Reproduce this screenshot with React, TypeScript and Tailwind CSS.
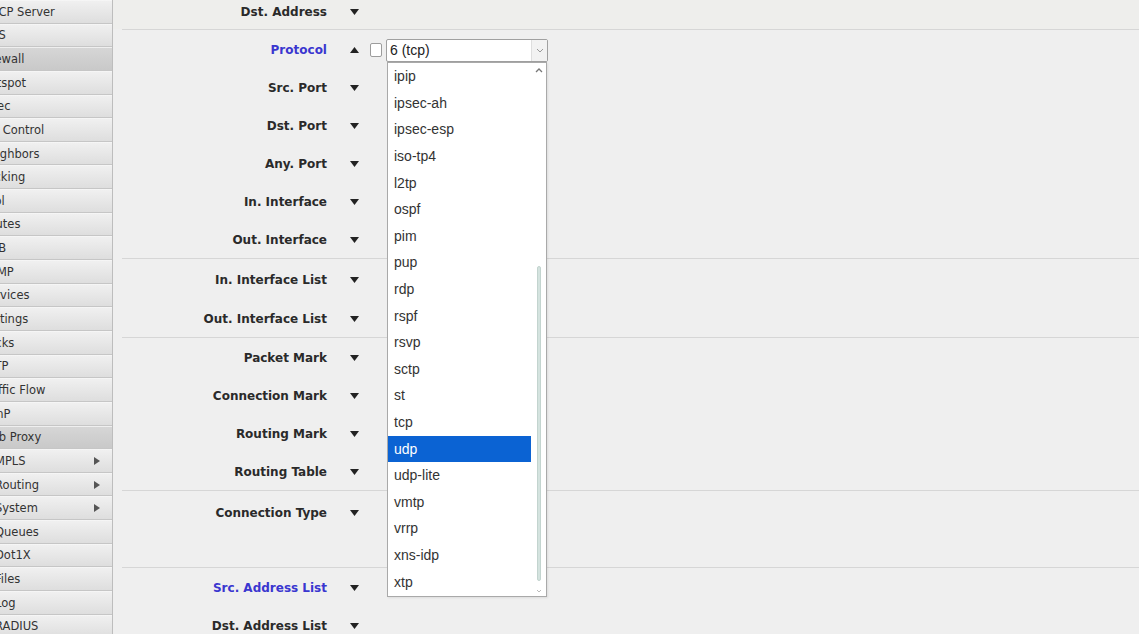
import React from 'react';

type MenuItem = { t: string; sub?: boolean; active?: boolean; arrow?: boolean };

const menu: MenuItem[] = [
    { t: 'DHCP Server', sub: true },
    { t: 'DNS', sub: true },
    { t: 'Firewall', sub: true, active: true },
    { t: 'Hotspot', sub: true },
    { t: 'IPsec', sub: true },
    { t: 'Kid Control', sub: true },
    { t: 'Neighbors', sub: true },
    { t: 'Packing', sub: true },
    { t: 'Pool', sub: true },
    { t: 'Routes', sub: true },
    { t: 'SMB', sub: true },
    { t: 'SNMP', sub: true },
    { t: 'Services', sub: true },
    { t: 'Settings', sub: true },
    { t: 'Socks', sub: true },
    { t: 'TFTP', sub: true },
    { t: 'Traffic Flow', sub: true },
    { t: 'UPnP', sub: true },
    { t: 'Web Proxy', sub: true, active: true },
    { t: 'MPLS', arrow: true },
    { t: 'Routing', arrow: true },
    { t: 'System', arrow: true },
    { t: 'Queues' },
    { t: 'Dot1X' },
    { t: 'Files' },
    { t: 'Log' },
    { t: 'RADIUS' },
];

const protocols = [
    'ipip', 'ipsec-ah', 'ipsec-esp', 'iso-tp4', 'l2tp', 'ospf', 'pim', 'pup', 'rdp', 'rspf',
    'rsvp', 'sctp', 'st', 'tcp', 'udp', 'udp-lite', 'vmtp', 'vrrp', 'xns-idp', 'xtp',
];

const Tri: React.FC<{ up?: boolean }> = ({ up }) => (
    <svg width="9" height="6" viewBox="0 0 9 6" className="block">
        {up ? <polygon points="4.5,0 9,6 0,6" fill="#222" /> : <polygon points="0,0 9,0 4.5,6" fill="#222" />}
    </svg>
);

const Row: React.FC<{ label: string; blue?: boolean; up?: boolean; h?: string; children?: React.ReactNode }> = ({ label, blue, up, h = 'h-[38px]', children }) => (
    <div className={`flex items-center pt-[2px] ${h}`}>
        <div className={`w-[214px] text-right text-[12px] font-bold ${blue ? 'text-[#3a36cf]' : 'text-[#2a2a2a]'}`}>{label}</div>
        <div className="ml-[23px] w-[9px]"><Tri up={up} /></div>
        {children}
    </div>
);

// thin separator between field groups
const Divider = () => <div className="ml-[9px] h-px bg-[#d6d6d6]" />;

const Sidebar = () => (
    <div className="w-[113px] shrink-0 overflow-hidden border-r border-[#bdbdbd] bg-[#e9e9e9]">
        {menu.map((m, i) => (
            <div
                key={i}
                className={`relative flex items-center h-[23.65px] pt-[1px] border-b border-[#c6c6c6] border-t border-t-white/70 overflow-hidden whitespace-nowrap text-[11.5px] text-[#333] ${m.active ? 'bg-gradient-to-b from-[#d6d6d6] to-[#c9c9c9]' : 'bg-gradient-to-b from-[#f0f0f0] to-[#dedede]'}`}
            >
                <span className={m.sub ? 'ml-[-19px]' : 'ml-[-5px]'}>{m.t}</span>
                {m.arrow && (
                    <svg width="6" height="8" viewBox="0 0 6 8" className="absolute left-[94px] top-1/2 -translate-y-1/2">
                        <polygon points="0,0 6,4 0,8" fill="#555" />
                    </svg>
                )}
            </div>
        ))}
    </div>
);

const ProtocolSelect = () => (
    <div className="relative ml-[11px] flex items-center">
        <div className="w-[12px] h-[14px] border border-[#9c9c9c] rounded-[2px] bg-white" />
        <div className="relative ml-[4px]">
            <div className="flex w-[162px] h-[23px] border border-[#a0a0a0] rounded-[2px] bg-white" style={{ fontFamily: '"Liberation Sans", Arial, sans-serif' }}>
                <div className="flex-1 pl-[3px] text-[14px] leading-[21px] text-[#222]">6 (tcp)</div>
                <div className="w-[16px] flex items-center justify-center bg-[#f2f2f2] border-l border-[#dedede]">
                    <svg width="8" height="5" viewBox="0 0 8 5"><polyline points="1,1 4,4 7,1" fill="none" stroke="#9a9a9a" strokeWidth="1" /></svg>
                </div>
            </div>
            <div
                className="absolute left-[1px] top-[23px] w-[160px] h-[535px] border border-[#a9a9a9] bg-white flex z-10 shadow-[1px_1px_2px_rgba(0,0,0,0.08)]"
                style={{ fontFamily: '"Liberation Sans", Arial, sans-serif' }}
            >
                <div className="w-[143px] pt-[1px]">
                    {protocols.map((p) => (
                        <div key={p} className={`h-[26.6px] pl-[6px] flex items-center text-[14px] ${p === 'udp' ? 'bg-[#0b63d3] text-white' : 'text-[#333]'}`}>
                            {p}
                        </div>
                    ))}
                </div>
                <div className="relative flex-1">
                    <svg width="8" height="5" viewBox="0 0 8 5" className="absolute left-[4px] top-[5px]"><polyline points="1,4 4,1 7,4" fill="none" stroke="#777" strokeWidth="1.3" /></svg>
                    <div className="absolute left-[6px] top-[203px] w-[4px] h-[315px] rounded-full bg-[#d4e3df] border border-[#c3d4cf]" />
                    <svg width="6" height="4" viewBox="0 0 6 4" className="absolute left-[5px] bottom-[3px]"><polyline points="1,1 3,3 5,1" fill="none" stroke="#bbb" strokeWidth="1" /></svg>
                </div>
            </div>
        </div>
    </div>
);

export default function App() {
    return (
        <div className="flex w-[1139px] h-[634px] overflow-hidden bg-[#efefef]" style={{ fontFamily: '"DejaVu Sans", Verdana, sans-serif' }}>
            <Sidebar />
            <div className="flex-1 min-w-0">
                <div className="h-[29px] pt-[1px] bg-[#eeeeec]">
                    <Row label="Dst. Address" h="h-[20px]" />
                </div>
                <Divider />
                <div>
                    <Row label="Protocol" blue up>
                        <ProtocolSelect />
                    </Row>
                    <Row label="Src. Port" />
                    <Row label="Dst. Port" />
                    <Row label="Any. Port" />
                    <Row label="In. Interface" />
                    <Row label="Out. Interface" />
                </div>
                <Divider />
                <div>
                    <Row label="In. Interface List" h="h-[40px]" />
                    <Row label="Out. Interface List" h="h-[38px]" />
                </div>
                <Divider />
                <div>
                    <Row label="Packet Mark" />
                    <Row label="Connection Mark" />
                    <Row label="Routing Mark" />
                    <Row label="Routing Table" />
                </div>
                <Divider />
                <div className="h-[76px]">
                    <Row label="Connection Type" h="h-[41px]" />
                </div>
                <Divider />
                <div>
                    <Row label="Src. Address List" blue />
                    <Row label="Dst. Address List" />
                </div>
            </div>
        </div>
    );
}
